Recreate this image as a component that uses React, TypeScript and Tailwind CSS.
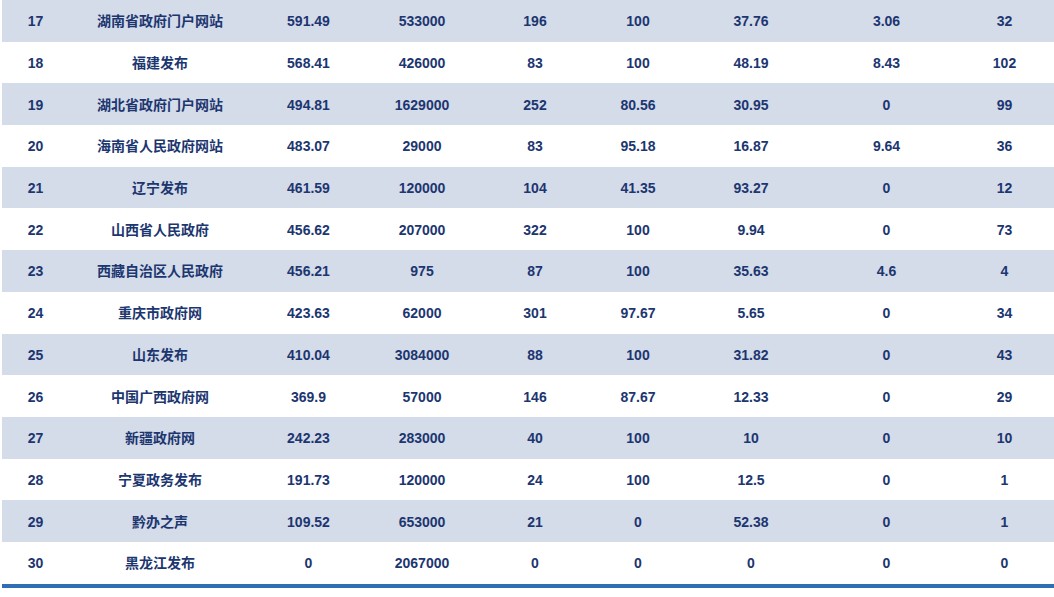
const rows = [
  ["17", "湖南省政府门户网站", "591.49", "533000", "196", "100", "37.76", "3.06", "32"],
  ["18", "福建发布", "568.41", "426000", "83", "100", "48.19", "8.43", "102"],
  ["19", "湖北省政府门户网站", "494.81", "1629000", "252", "80.56", "30.95", "0", "99"],
  ["20", "海南省人民政府网站", "483.07", "29000", "83", "95.18", "16.87", "9.64", "36"],
  ["21", "辽宁发布", "461.59", "120000", "104", "41.35", "93.27", "0", "12"],
  ["22", "山西省人民政府", "456.62", "207000", "322", "100", "9.94", "0", "73"],
  ["23", "西藏自治区人民政府", "456.21", "975", "87", "100", "35.63", "4.6", "4"],
  ["24", "重庆市政府网", "423.63", "62000", "301", "97.67", "5.65", "0", "34"],
  ["25", "山东发布", "410.04", "3084000", "88", "100", "31.82", "0", "43"],
  ["26", "中国广西政府网", "369.9", "57000", "146", "87.67", "12.33", "0", "29"],
  ["27", "新疆政府网", "242.23", "283000", "40", "100", "10", "0", "10"],
  ["28", "宁夏政务发布", "191.73", "120000", "24", "100", "12.5", "0", "1"],
  ["29", "黔办之声", "109.52", "653000", "21", "0", "52.38", "0", "1"],
  ["30", "黑龙江发布", "0", "2067000", "0", "0", "0", "0", "0"],
];

export default function App() {
  return (
    <div className="w-[1054px] h-[597px] bg-white pl-[2px] overflow-hidden">
      <div
        className="text-[14px] font-bold text-[#1c3670]"
        style={{ fontFamily: '"Liberation Sans", Arial, "Noto Sans CJK SC", sans-serif' }}
      >
        {rows.map((r, i) => (
          <div
            key={r[0]}
            className={`grid h-[41.7px] grid-cols-[67px_182px_115px_112px_114px_92px_134px_137px_99px] items-center text-center ${
              i % 2 === 0 ? "bg-[#d4dbe9]" : "bg-white"
            }`}
          >
            {r.map((c, j) => (
              <div key={j} className="whitespace-nowrap pt-[2px]">
                {c}
              </div>
            ))}
          </div>
        ))}
      </div>
      <div className="h-[4px] bg-[#2f6db5]" />
    </div>
  );
}
